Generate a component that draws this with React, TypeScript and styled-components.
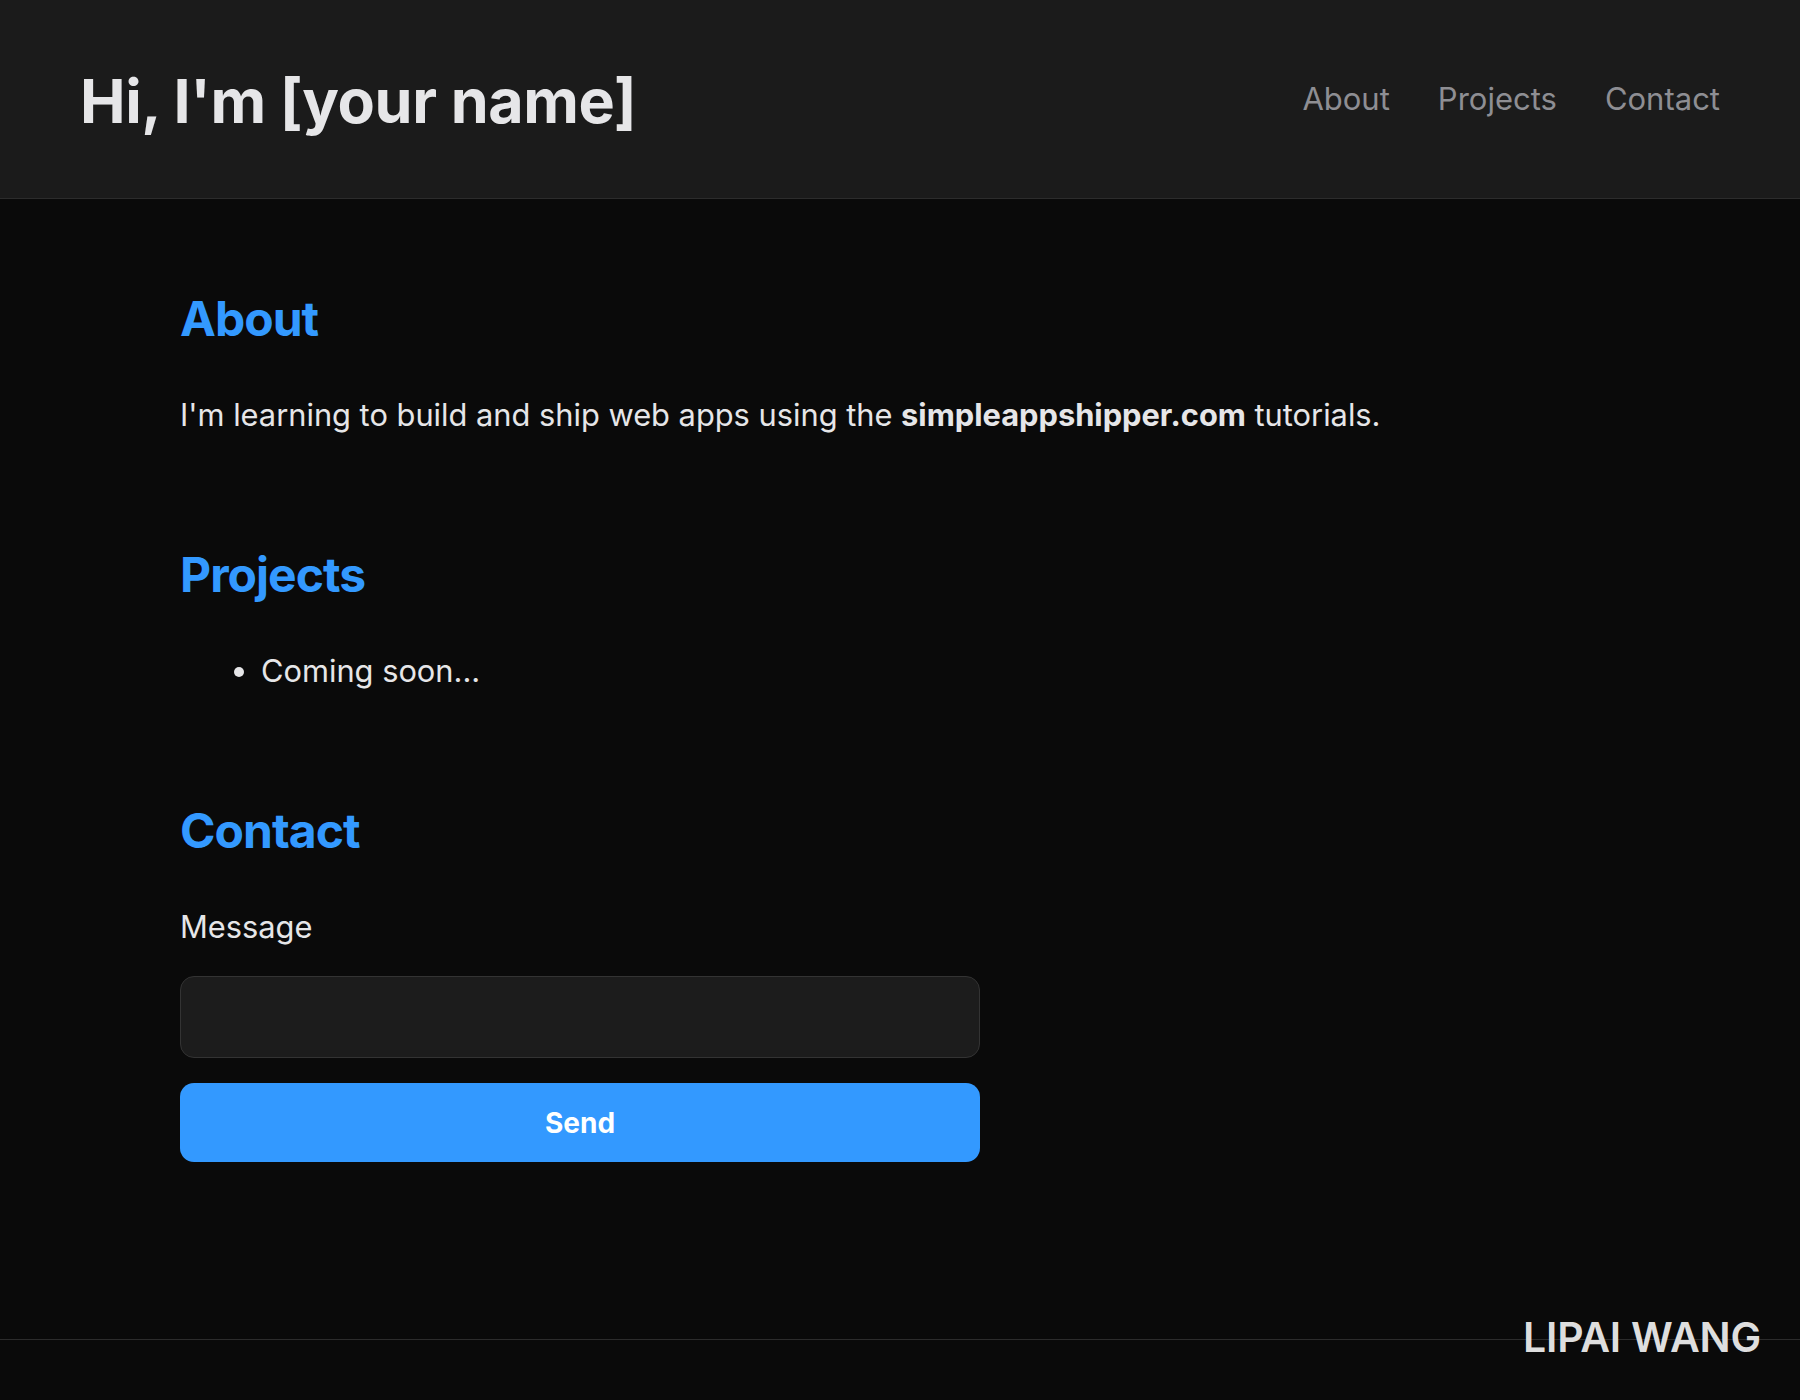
import React from "react";
import styled, { createGlobalStyle } from "styled-components";

export default function App() {
  return (
    <>
      <GlobalStyle />
      <Page>
        <Header>
          <Title>Hi, I'm [your name]</Title>
          <Nav>
            <NavLink href="#about">About</NavLink>
            <NavLink href="#projects">Projects</NavLink>
            <NavLink href="#contact">Contact</NavLink>
          </Nav>
        </Header>

        <Main>
          <Section id="about">
            <SectionTitle>About</SectionTitle>
            <Text>
              I'm learning to build and ship web apps using the <strong>simpleappshipper.com</strong> tutorials.
            </Text>
          </Section>

          <Section id="projects">
            <SectionTitle>Projects</SectionTitle>
            <ProjectList>
              <li>Coming soon...</li>
            </ProjectList>
          </Section>

          <Section id="contact">
            <SectionTitle>Contact</SectionTitle>
            <ContactForm onSubmit={(e) => e.preventDefault()}>
              <Label htmlFor="message">Message</Label>
              <MessageInput id="message" />
              <SendButton type="submit">Send</SendButton>
            </ContactForm>
          </Section>
        </Main>

        <Footer />
        <Watermark>LIPAI WANG</Watermark>
      </Page>
    </>
  );
}

// global
const GlobalStyle = createGlobalStyle`
  * {
    box-sizing: border-box;
  }

  html, body {
    margin: 0;
    padding: 0;
    background: #0a0a0a;
    color: #e6e6e8;
    font-family: Inter, "Liberation Sans", sans-serif;
  }
`;

// styled Components
const Page = styled.div`
  min-height: 100vh;
  display: flex;
  flex-direction: column;
  position: relative;
`;

const Header = styled.header`
  height: 199px;
  padding: 0 80px;
  display: flex;
  justify-content: space-between;
  align-items: center;
  background: #1b1b1b;
  border-bottom: 1px solid #2c2c2c;
`;

const Title = styled.h1`
  margin: 5px 0 0;
  font-size: 61px;
  font-weight: 700;
  letter-spacing: -0.4px;
  color: #e6e6e8;
  line-height: 1.2;
`;

const Nav = styled.nav`
  display: flex;
  gap: 48px;
`;

const NavLink = styled.a`
  font-size: 31px;
  color: #8e8e93;
  text-decoration: none;
  line-height: 1.2;
`;

const Main = styled.main`
  flex: 1;
  padding: 91px 180px 0;
  display: flex;
  flex-direction: column;
  gap: 113px;
`;

const Section = styled.section`
  display: flex;
  flex-direction: column;
`;

const SectionTitle = styled.h2`
  margin: 0 0 48px;
  font-size: 48px;
  line-height: 58px;
  font-weight: 700;
  letter-spacing: -0.02em;
  color: #3399ff;
`;

const Text = styled.p`
  margin: 0;
  font-size: 30.8px;
  line-height: 37px;
  color: #e6e6e8;

  strong {
    font-weight: 700;
  }
`;

const ProjectList = styled.ul`
  margin: 0;
  padding-left: 81px;
  font-size: 30.8px;
  line-height: 37px;
  color: #e6e6e8;
`;

const ContactForm = styled.form`
  width: 800px;
  display: flex;
  flex-direction: column;
`;

const Label = styled.label`
  font-size: 30.8px;
  line-height: 37px;
  color: #e6e6e8;
  margin-bottom: 31px;
`;

const MessageInput = styled.input`
  height: 82px;
  background: #1c1c1c;
  border: 1px solid #333333;
  border-radius: 14px;
  color: #e6e6e8;
  font-size: 30px;
  padding: 0 20px;
  outline: none;
  margin-bottom: 25px;
`;

const SendButton = styled.button`
  height: 79px;
  border: none;
  border-radius: 14px;
  background: #3399ff;
  color: #ffffff;
  font-family: Inter, "Liberation Sans", sans-serif;
  font-size: 28px;
  font-weight: 700;
  cursor: pointer;
`;

const Footer = styled.footer`
  height: 61px;
  border-top: 1px solid #2c2c2c;
`;

const Watermark = styled.div`
  position: absolute;
  right: 39px;
  bottom: 37px;
  font-size: 41px;
  font-weight: 600;
  letter-spacing: -0.2px;
  line-height: 1.21;
  color: #dedede;
`;
